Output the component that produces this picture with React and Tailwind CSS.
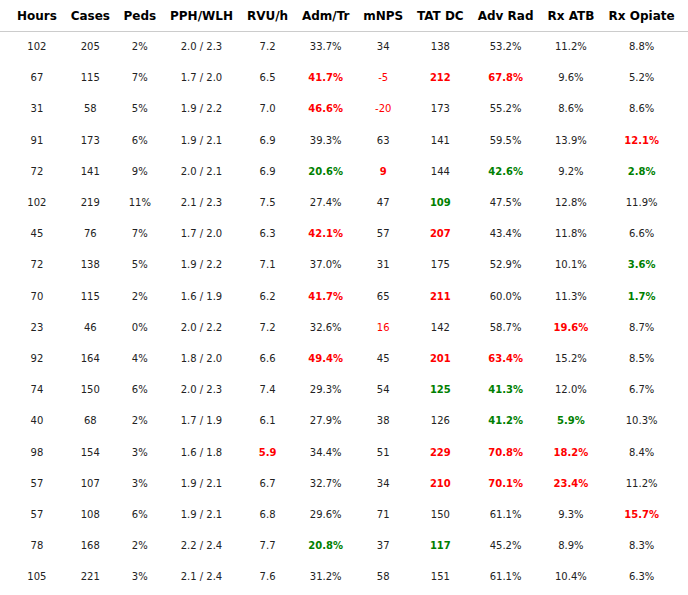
import React from "react";

const headers = ["Hours", "Cases", "Peds", "PPH/WLH", "RVU/h", "Adm/Tr", "mNPS", "TAT DC", "Adv Rad", "Rx ATB", "Rx Opiate"];

const rows = [
  ["102", "205", "2%", "2.0 / 2.3", "7.2", "33.7%", "34", "138", "53.2%", "11.2%", "8.8%"],
  ["67", "115", "7%", "1.7 / 2.0", "6.5", "r:41.7%", "n:-5", "r:212", "r:67.8%", "9.6%", "5.2%"],
  ["31", "58", "5%", "1.9 / 2.2", "7.0", "r:46.6%", "n:-20", "173", "55.2%", "8.6%", "8.6%"],
  ["91", "173", "6%", "1.9 / 2.1", "6.9", "39.3%", "63", "141", "59.5%", "13.9%", "r:12.1%"],
  ["72", "141", "9%", "2.0 / 2.1", "6.9", "g:20.6%", "r:9", "144", "g:42.6%", "9.2%", "g:2.8%"],
  ["102", "219", "11%", "2.1 / 2.3", "7.5", "27.4%", "47", "g:109", "47.5%", "12.8%", "11.9%"],
  ["45", "76", "7%", "1.7 / 2.0", "6.3", "r:42.1%", "57", "r:207", "43.4%", "11.8%", "6.6%"],
  ["72", "138", "5%", "1.9 / 2.2", "7.1", "37.0%", "31", "175", "52.9%", "10.1%", "g:3.6%"],
  ["70", "115", "2%", "1.6 / 1.9", "6.2", "r:41.7%", "65", "r:211", "60.0%", "11.3%", "g:1.7%"],
  ["23", "46", "0%", "2.0 / 2.2", "7.2", "32.6%", "n:16", "142", "58.7%", "r:19.6%", "8.7%"],
  ["92", "164", "4%", "1.8 / 2.0", "6.6", "r:49.4%", "45", "r:201", "r:63.4%", "15.2%", "8.5%"],
  ["74", "150", "6%", "2.0 / 2.3", "7.4", "29.3%", "54", "g:125", "g:41.3%", "12.0%", "6.7%"],
  ["40", "68", "2%", "1.7 / 1.9", "6.1", "27.9%", "38", "126", "g:41.2%", "g:5.9%", "10.3%"],
  ["98", "154", "3%", "1.6 / 1.8", "r:5.9", "34.4%", "51", "r:229", "r:70.8%", "r:18.2%", "8.4%"],
  ["57", "107", "3%", "1.9 / 2.1", "6.7", "32.7%", "34", "r:210", "r:70.1%", "r:23.4%", "11.2%"],
  ["57", "108", "6%", "1.9 / 2.1", "6.8", "29.6%", "71", "150", "61.1%", "9.3%", "r:15.7%"],
  ["78", "168", "2%", "2.2 / 2.4", "7.7", "g:20.8%", "37", "g:117", "45.2%", "8.9%", "8.3%"],
  ["105", "221", "3%", "2.1 / 2.4", "7.6", "31.2%", "58", "151", "61.1%", "10.4%", "6.3%"],
];

function edgePad(j) {
  if (j === 0) return "pl-[16px] pr-[6px]";
  if (j === 10) return "pl-[6px] pr-[12px]";
  return "px-[6px]";
}

function Cell({ v, j }) {
  let cls = "text-[#222222]";
  let text = v;
  if (v.startsWith("r:")) {
    cls = "text-[#ff0000] font-bold";
    text = v.slice(2);
  } else if (v.startsWith("g:")) {
    cls = "text-[#008000] font-bold";
    text = v.slice(2);
  } else if (v.startsWith("n:")) {
    cls = "text-[#ff0000]";
    text = v.slice(2);
  }
  return (
    <td className={`h-[31.2px] ${edgePad(j)} text-center align-middle text-[10px] leading-[12px] whitespace-nowrap ${cls}`}>
      {text}
    </td>
  );
}

export default function App() {
  return (
    <div className="w-[688px] h-[595px] overflow-hidden bg-white font-['DejaVu_Sans',sans-serif]">
      <table className="w-full border-collapse">
        <thead>
          <tr className="border-b border-[#cccccc]">
            {headers.map((h, j) => (
              <th key={h} className={`h-[31.5px] ${edgePad(j)} text-center align-middle text-[12px] leading-[14px] font-bold text-black whitespace-nowrap`}>
                {h}
              </th>
            ))}
          </tr>
        </thead>
        <tbody>
          {rows.map((r, i) => (
            <tr key={i}>
              {r.map((v, j) => (
                <Cell key={j} v={v} j={j} />
              ))}
            </tr>
          ))}
        </tbody>
      </table>
    </div>
  );
}
